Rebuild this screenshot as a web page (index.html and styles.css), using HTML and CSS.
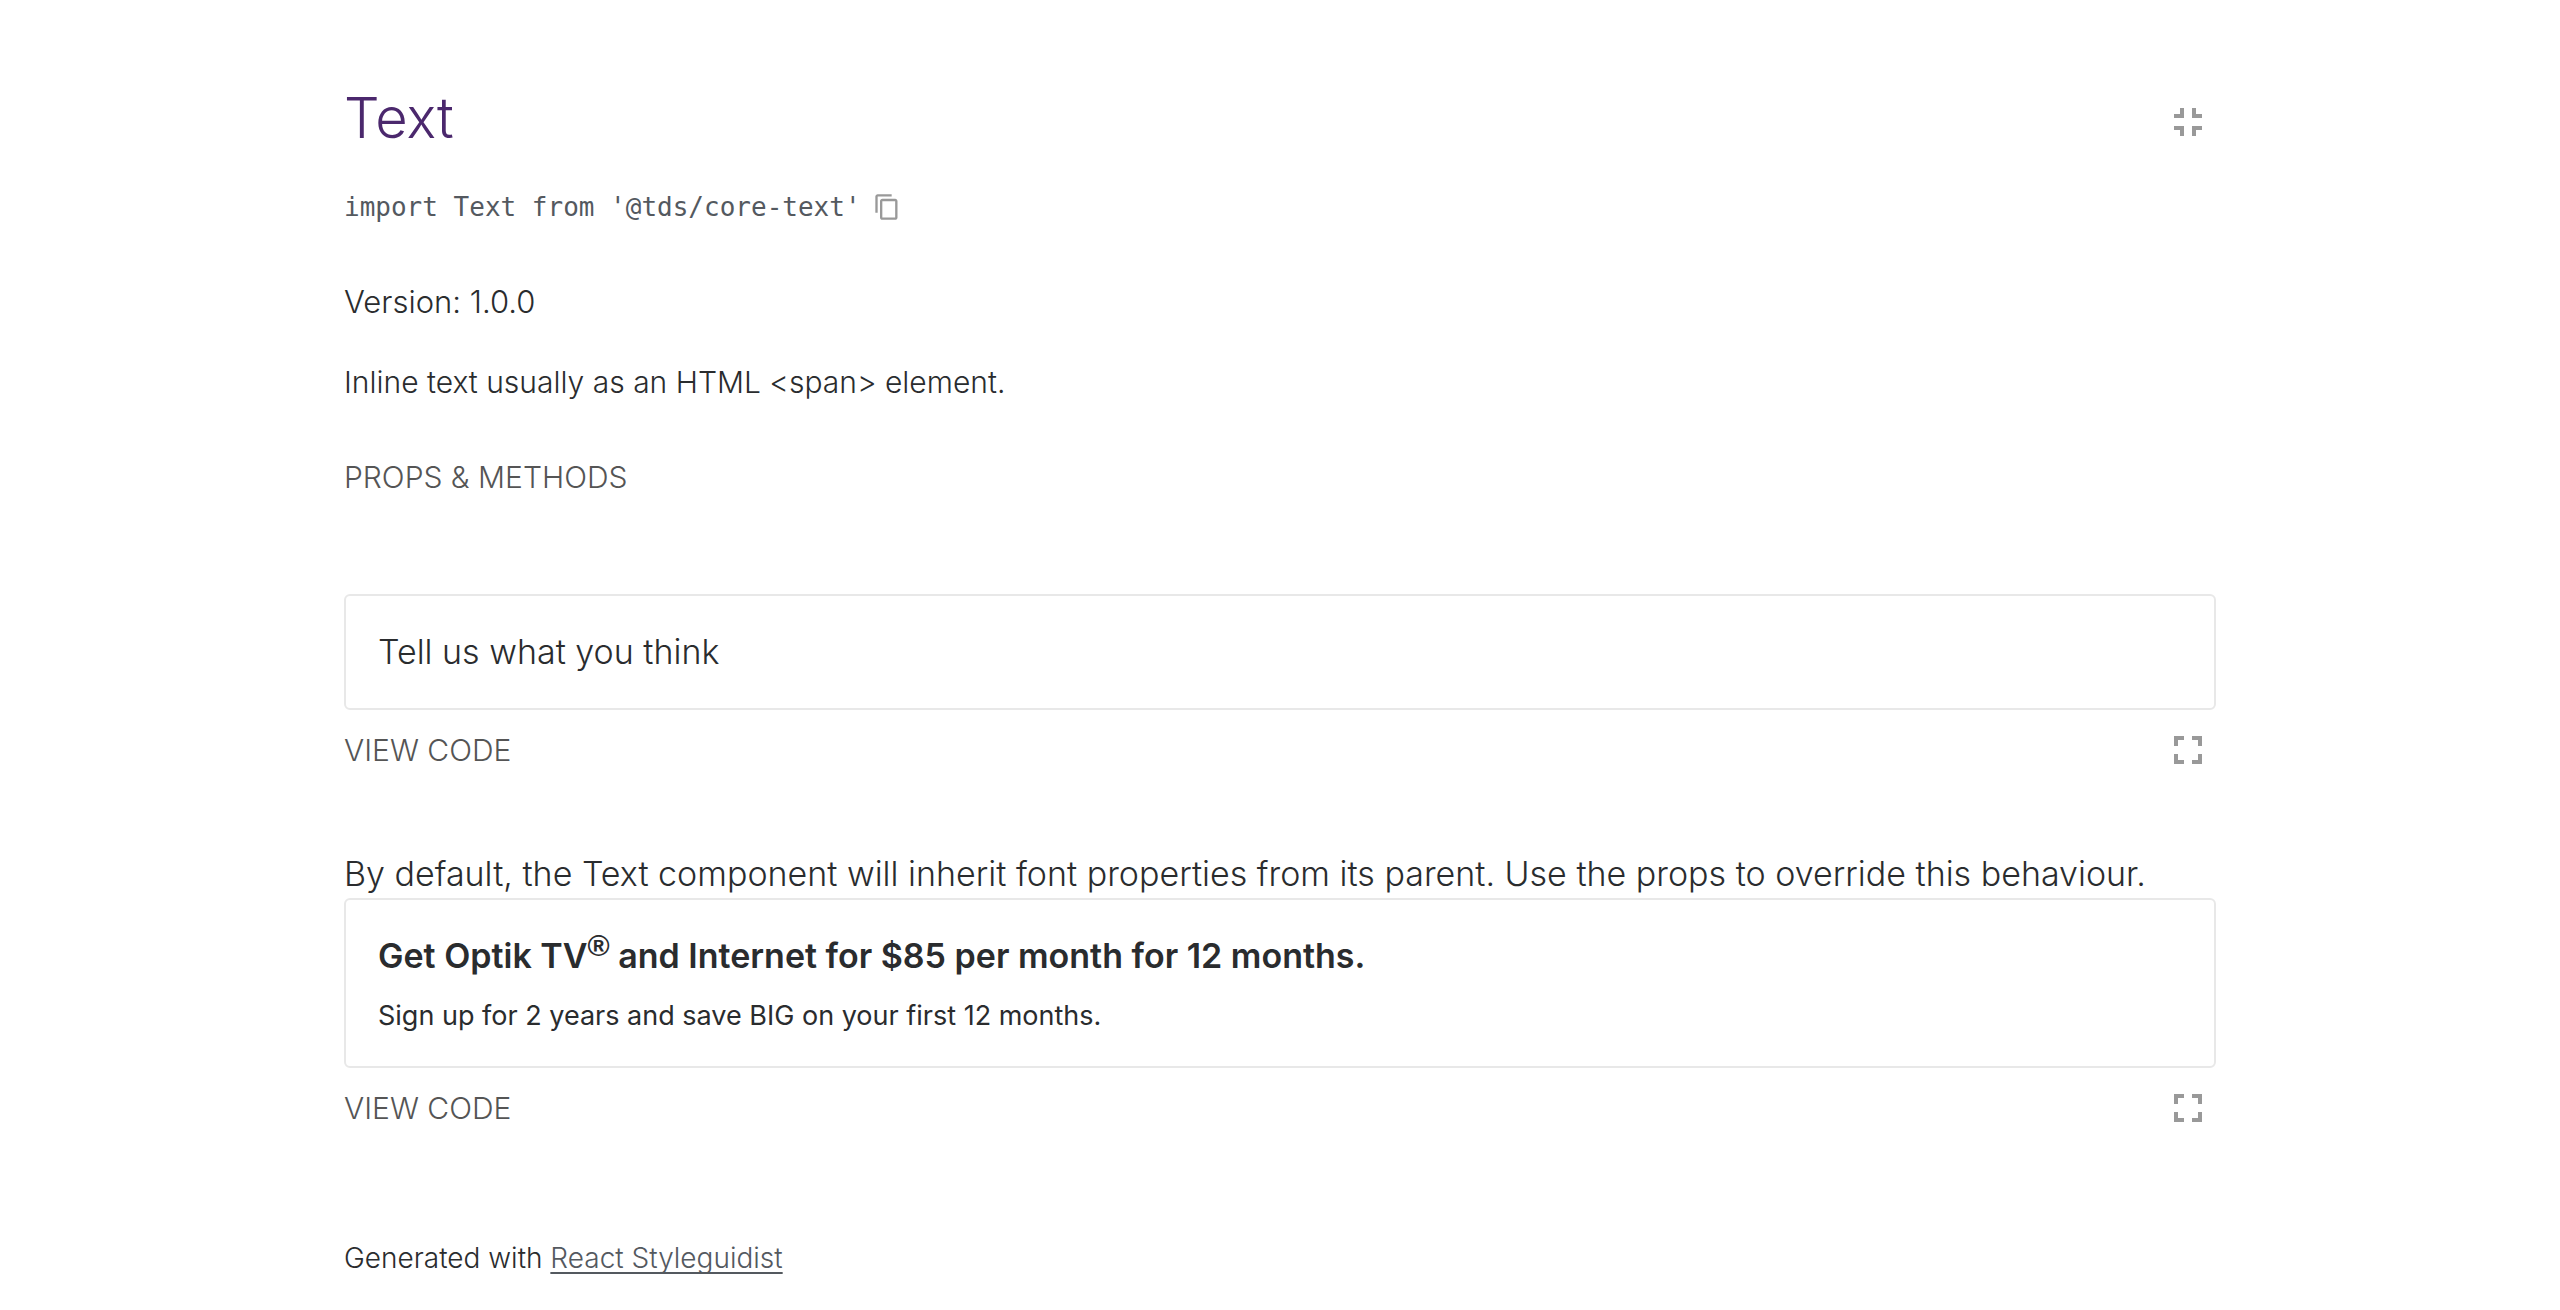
FILE: index.html
```
<!DOCTYPE html>
<html lang="en">
<head>
<meta charset="utf-8">
<meta name="viewport" content="width=device-width, initial-scale=1">
<title>Text</title>
<link rel="stylesheet" href="styles.css">
</head>
<body>
<main class="page">
  <header class="header">
    <h1 class="title">Text</h1>
    <a class="icon-link" href="#all" aria-label="Show all components">
      <svg class="icon" viewBox="0 0 24 24" aria-hidden="true"><path d="M5 16h3v3h2v-5H5v2zm3-8H5v2h5V5H8v3zm6 11h2v-3h3v-2h-5v5zm2-11V5h-2v5h5V8h-3z"/></svg>
    </a>
  </header>

  <div class="import">
    <code class="path">import Text from '@tds/core-text'</code>
    <button class="copy" type="button" aria-label="Copy to clipboard">
      <svg class="copy-icon" viewBox="0 0 24 24" aria-hidden="true"><path d="M16 1H4c-1.1 0-2 .9-2 2v14h2V3h12V1zm3 4H8c-1.1 0-2 .9-2 2v14c0 1.1.9 2 2 2h11c1.1 0 2-.9 2-2V7c0-1.1-.9-2-2-2zm0 16H8V7h11v14z"/></svg>
    </button>
  </div>

  <section class="docs">
    <p class="doc version">Version: 1.0.0</p>
    <p class="doc">Inline text usually as an HTML &lt;span&gt; element.</p>
  </section>
  <button class="tab props" type="button">PROPS &amp; METHODS</button>

  <section class="example">
    <div class="preview"><span class="large">Tell us what you think</span></div>
    <div class="controls">
      <button class="tab" type="button">VIEW CODE</button>
      <a class="icon-link" href="#example-1" aria-label="Open isolated example">
        <svg class="icon" viewBox="0 0 24 24" aria-hidden="true"><path d="M7 14H5v5h5v-2H7v-3zm-2-4h2V7h3V5H5v5zm12 7h-3v2h5v-5h-2v3zM14 5v2h3v3h2V5h-5z"/></svg>
      </a>
    </div>
  </section>

  <section class="example">
    <p class="large">By default, the Text component will inherit font properties from its parent. Use the props to override this behaviour.</p>
    <div class="preview">
      <p class="large offer">Get Optik TV<sup class="mark">®</sup> and Internet for $85 per month for 12 months.</p>
      <p class="small">Sign up for 2 years and save BIG on your first 12 months.</p>
    </div>
    <div class="controls">
      <button class="tab" type="button">VIEW CODE</button>
      <a class="icon-link" href="#example-2" aria-label="Open isolated example">
        <svg class="icon" viewBox="0 0 24 24" aria-hidden="true"><path d="M7 14H5v5h5v-2H7v-3zm-2-4h2V7h3V5H5v5zm12 7h-3v2h5v-5h-2v3zM14 5v2h3v3h2V5h-5z"/></svg>
      </a>
    </div>
  </section>

  <footer class="footer">Generated with <a class="footer-link" href="#styleguidist">React Styleguidist</a></footer>
</main>
</body>
</html>
```
FILE: styles.css
```
* {
  box-sizing: border-box;
}

body {
  margin: 0;
  background: #fff;
  color: #2a2c2e;
  font-family: Inter, "Liberation Sans", sans-serif;
  font-weight: 300;
}

h1,
p {
  margin: 0;
  font-weight: inherit;
}

button {
  padding: 0;
  border: 0;
  background: none;
  font: inherit;
  cursor: pointer;
}

.page {
  max-width: 1936px;
  margin: 0 auto;
  padding: 90px 32px 32px;
}

.header {
  display: flex;
  justify-content: space-between;
  align-items: flex-end;
  padding-right: 4px;
}

.title {
  color: #4b286d;
  font-size: 56px;
  line-height: 56px;
}

.icon-link,
.copy {
  display: block;
  color: #999;
}

.icon,
.copy-icon {
  display: block;
  width: 48px;
  height: 48px;
  fill: currentColor;
}

.copy-icon {
  width: 28px;
  height: 28px;
}

.import {
  display: flex;
  align-items: center;
  gap: 12px;
  margin-top: 45px;
}

.path {
  color: #54595f;
  font: 26px/32px "DejaVu Sans Mono", monospace;
}

.docs {
  display: flex;
  flex-direction: column;
  gap: 40px;
  margin-top: 59px;
}

.doc {
  font-size: 30px;
  line-height: 40px;
}

.version {
  font-size: 31px;
}

.tab {
  color: #555;
  font-size: 30px;
  line-height: 40px;
}

.props {
  display: block;
  margin-top: 55px;
}

.example {
  margin-top: 76px;
}

.props + .example {
  margin-top: 97px;
}

.preview {
  display: flex;
  flex-direction: column;
  gap: 18px;
  padding: 32px;
  border: 2px solid #e8e8e8;
  border-radius: 6px;
}

.large {
  font-size: 34px;
  line-height: 48px;
}

.offer {
  font-weight: 600;
}

.mark {
  font-family: "Liberation Sans", sans-serif;
  font-size: 30px;
  font-weight: 700;
  line-height: 0;
}

.small {
  font-size: 27px;
  font-weight: 400;
  line-height: 36px;
}

.controls {
  display: flex;
  justify-content: space-between;
  align-items: center;
  margin-top: 16px;
  padding-right: 4px;
}

.footer {
  margin-top: 106px;
  font-size: 28px;
  line-height: 40px;
}

.footer-link {
  color: #54595f;
  text-decoration: underline;
  text-decoration-thickness: 2px;
  text-decoration-skip-ink: none;
  text-underline-offset: 4px;
}
```
